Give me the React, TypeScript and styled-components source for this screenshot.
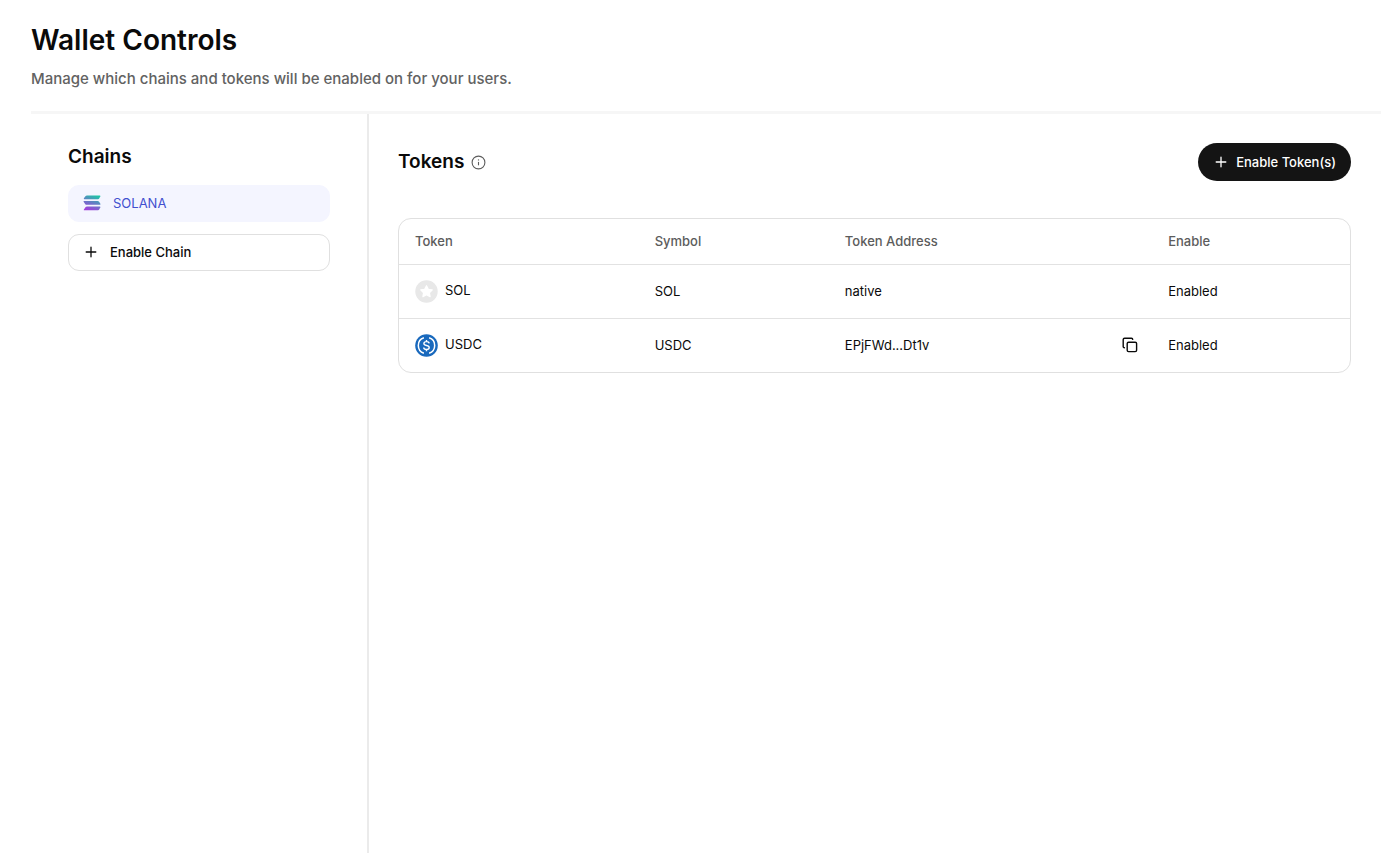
import React from "react";
import styled, { createGlobalStyle, css } from "styled-components";

const GlobalStyle = createGlobalStyle`
  *, *::before, *::after { box-sizing: border-box; }
  html, body, #root { height: 100%; }
  body {
    margin: 0;
    background: #fff;
    color: #0a0a0a;
    font-family: Inter, "Liberation Sans", sans-serif;
    font-size: 13px;
    line-height: 20px;
  }
  button { font: inherit; cursor: pointer; }
`;

const Page = styled.div`
  display: flex;
  flex-direction: column;
  min-height: 100%;
  padding: 20px 19px 0 31px;
`;

const Header = styled.header`
  padding-bottom: 22px;
  border-bottom: 3px solid #f6f6f6;
`;

const Title = styled.h1`
  margin: 0;
  font-size: 28px;
  line-height: 40px;
  font-weight: 600;
`;

const Subtitle = styled.p`
  margin: 8px 0 0;
  color: #626262;
  font-size: 15px;
  font-weight: 500;
  line-height: 21px;
`;

const Body = styled.div`
  display: flex;
  flex: 1;
`;

const Sidebar = styled.nav`
  display: flex;
  flex-direction: column;
  flex: 0 0 338px;
  padding: 31px 37px;
  border-right: 2px solid #ebebeb;
`;

const SectionTitle = styled.h2`
  margin: 0;
  font-size: 19px;
  line-height: 24px;
  font-weight: 600;
`;

const ChainList = styled.div`
  display: flex;
  flex-direction: column;
  gap: 12px;
  margin-top: 16px;
`;

const ChainButton = styled.button<{ $active?: boolean }>`
  display: flex;
  align-items: center;
  gap: ${(p) => (p.$active ? "12px" : "11px")};
  height: 37px;
  padding: 0 14px 1px;
  border: 1px solid #e0e0e0;
  border-radius: 11px;
  background: #fff;
  color: #0a0a0a;
  font-weight: 500;
  ${(p) =>
    p.$active &&
    css`
      border-color: #f4f5ff;
      background: #f4f5ff;
      color: #4250cf;
      font-weight: 400;
    `}
`;

const Main = styled.main`
  flex: 1;
  min-width: 0;
  padding: 29px 30px 30px 29px;
`;

const Toolbar = styled.div`
  display: flex;
  align-items: center;
  justify-content: space-between;
`;

const TitleGroup = styled.div`
  display: flex;
  align-items: center;
  gap: 7px;
`;

const IconButton = styled.button`
  display: flex;
  padding: 0;
  border: 0;
  background: none;
  color: ${(p) => p.color ?? "#0a0a0a"};
`;

const PrimaryButton = styled.button`
  display: flex;
  align-items: center;
  gap: 7px;
  height: 38px;
  padding: 0 15px;
  border: 0;
  border-radius: 19px;
  background: #141414;
  color: #fff;
  font-weight: 500;
`;

const TableCard = styled.div`
  margin-top: 37px;
  border: 1px solid #e0e0e0;
  border-radius: 13px;
  overflow: hidden;
`;

const Table = styled.table`
  width: 100%;
  border-collapse: collapse;
  table-layout: fixed;
`;

const Column = styled.col<{ $width?: string }>`
  width: ${(p) => p.$width ?? "auto"};
`;

const HeadCell = styled.th`
  height: 45px;
  padding: 0 16px;
  color: #5c5c5c;
  font-weight: 500;
  text-align: left;
`;

const Row = styled.tr`
  border-top: 1px solid #e2e2e2;
`;

const Cell = styled.td`
  height: 54px;
  padding: 0 16px;
`;

const TokenName = styled.div`
  display: flex;
  align-items: flex-start;
  gap: 7px;
`;

const AddressCell = styled(Cell)`
  padding-right: 14px;
`;

const Address = styled.div`
  display: flex;
  align-items: center;
  justify-content: space-between;
`;

const PlusIcon = () => (
  <svg width="16" height="16" viewBox="0 0 16 16" fill="none" stroke="currentColor" strokeWidth="1.3" strokeLinecap="round" aria-hidden="true">
    <path d="M8 3.2v9.6M3.2 8h9.6" />
  </svg>
);

const InfoIcon = () => (
  <svg width="15" height="15" viewBox="0 0 15 15" fill="none" stroke="currentColor" strokeWidth="1.1" aria-hidden="true">
    <circle cx="7.5" cy="7.5" r="6.4" />
    <path d="M7.5 6.9v3.4" />
    <circle cx="7.5" cy="4.9" r="0.7" fill="currentColor" stroke="none" />
  </svg>
);

const CopyIcon = () => (
  <svg width="16" height="16" viewBox="0 0 16 16" fill="none" stroke="currentColor" strokeWidth="1.4" strokeLinejoin="round" strokeLinecap="round" aria-hidden="true">
    <rect x="5.2" y="5.2" width="9.4" height="9.4" rx="1.4" />
    <path d="M2.4 10.7c-.8 0-1.2-.5-1.2-1.200V2.600c0-.8.6-1.400 1.400-1.400h6.900c.7 0 1.200.4 1.200 1.200" />
  </svg>
);

const SolanaIcon = () => (
  <svg width="18" height="16" viewBox="0 0 18 16" aria-hidden="true">
    <defs>
      <linearGradient id="solana" x1="12" y1="0" x2="6" y2="16" gradientUnits="userSpaceOnUse">
        <stop offset="0" stopColor="#1fc5a6" />
        <stop offset="0.5" stopColor="#6878c6" />
        <stop offset="1" stopColor="#a23cdc" />
      </linearGradient>
    </defs>
    <g fill="url(#solana)">
      <path d="M2.600.9Q3.100.4 3.900.4H16.600q1.100 0 .7.900L16.200 3.500q-.4.700-1.200.700H1.500q-1.100 0-.6-.9Z" />
      <path d="M1.200 5.900H14.600q.8 0 1.300.500l1.500 2.400q.5.900-.6.900H3.600q-.8 0-1.300-.5L.6 6.800Q.1 5.900 1.200 5.900Z" />
      <path d="M2.600 12Q3.100 11.500 3.900 11.500H16.600q1.100 0 .7.900L16.200 14.600q-.4.700-1.200.7H1.500q-1.100 0-.6-.9Z" />
    </g>
  </svg>
);

const PlaceholderTokenIcon = () => (
  <svg width="23" height="23" viewBox="0 0 23 23" aria-hidden="true">
    <circle cx="11.5" cy="11.5" r="11.2" fill="#e8e8e8" />
    <path
      d="M11.5 5.700l1.800 3.600 4 .6-2.900 2.800.7 4-3.600-1.900-3.600 1.900.7-4-2.900-2.800 4-.6Z"
      fill="#fff"
      stroke="#fff"
      strokeWidth="1.200"
      strokeLinejoin="round"
    />
  </svg>
);

const UsdcIcon = () => (
  <svg width="23" height="23" viewBox="0 0 23 23" fill="none" stroke="#fff" aria-hidden="true">
    <circle cx="11.5" cy="11.5" r="11.3" fill="#1969bd" stroke="none" />
    <path d="M8.900 3.800a8.100 8.100 0 0 0 0 15.400M14.100 3.800a8.100 8.100 0 0 1 0 15.400" strokeWidth="1.500" />
    <path d="M14.200 9.400c-.2-1.200-1.200-1.800-2.700-1.800-1.600 0-2.600.7-2.600 1.900 0 2.800 5.300 1.200 5.300 4 0 1.200-1.100 2-2.700 2s-2.700-.8-2.800-2M11.500 5.900v1.700M11.500 15.500v1.700" strokeWidth="1.400" />
  </svg>
);

interface Token {
  name: string;
  symbol: string;
  address: string;
  copyable: boolean;
  status: string;
  icon: React.ReactNode;
}

const tokens: Token[] = [
  { name: "SOL", symbol: "SOL", address: "native", copyable: false, status: "Enabled", icon: <PlaceholderTokenIcon /> },
  { name: "USDC", symbol: "USDC", address: "EPjFWd...Dt1v", copyable: true, status: "Enabled", icon: <UsdcIcon /> },
];

export default function App() {
  return (
    <>
      <GlobalStyle />
      <Page>
        <Header>
          <Title>Wallet Controls</Title>
          <Subtitle>Manage which chains and tokens will be enabled on for your users.</Subtitle>
        </Header>
        <Body>
          <Sidebar aria-label="Chains">
            <SectionTitle>Chains</SectionTitle>
            <ChainList>
              <ChainButton type="button" $active>
                <SolanaIcon />
                SOLANA
              </ChainButton>
              <ChainButton type="button">
                <PlusIcon />
                Enable Chain
              </ChainButton>
            </ChainList>
          </Sidebar>
          <Main>
            <Toolbar>
              <TitleGroup>
                <SectionTitle>Tokens</SectionTitle>
                <IconButton type="button" aria-label="About tokens" color="#5c5c5c">
                  <InfoIcon />
                </IconButton>
              </TitleGroup>
              <PrimaryButton type="button">
                <PlusIcon />
                Enable Token(s)
              </PrimaryButton>
            </Toolbar>
            <TableCard>
              <Table>
                <colgroup>
                  <Column $width="25.2%" />
                  <Column $width="20%" />
                  <Column $width="34%" />
                  <Column />
                </colgroup>
                <thead>
                  <tr>
                    <HeadCell scope="col">Token</HeadCell>
                    <HeadCell scope="col">Symbol</HeadCell>
                    <HeadCell scope="col">Token Address</HeadCell>
                    <HeadCell scope="col">Enable</HeadCell>
                  </tr>
                </thead>
                <tbody>
                  {tokens.map((token) => (
                    <Row key={token.symbol}>
                      <Cell>
                        <TokenName>
                          {token.icon}
                          {token.name}
                        </TokenName>
                      </Cell>
                      <Cell>{token.symbol}</Cell>
                      <AddressCell>
                        <Address>
                          {token.address}
                          {token.copyable && (
                            <IconButton type="button" aria-label={`Copy ${token.name} address`}>
                              <CopyIcon />
                            </IconButton>
                          )}
                        </Address>
                      </AddressCell>
                      <Cell>{token.status}</Cell>
                    </Row>
                  ))}
                </tbody>
              </Table>
            </TableCard>
          </Main>
        </Body>
      </Page>
    </>
  );
}
